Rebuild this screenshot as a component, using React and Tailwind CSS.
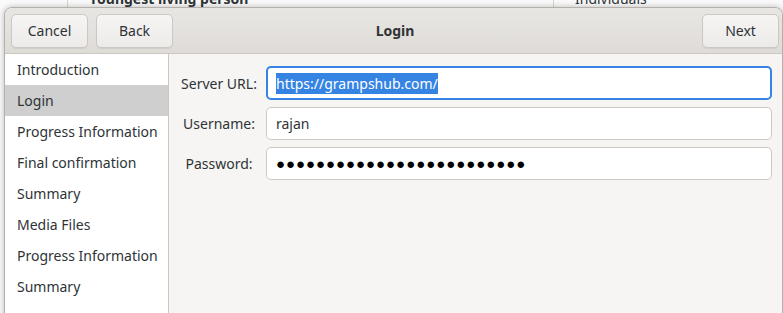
import React from 'react';

const steps = [
  'Introduction',
  'Login',
  'Progress Information',
  'Final confirmation',
  'Summary',
  'Media Files',
  'Progress Information',
  'Summary',
];

const font = { fontFamily: '"Noto Sans", "Open Sans", sans-serif' };

const Button = ({ children }) => (
  <button className="h-[34px] w-[77px] rounded-[5px] border border-[#cdc7c2] bg-gradient-to-b from-[#f6f5f4] to-[#edebe9] text-[14px] text-[#2e3436] shadow-[0_1px_1px_rgba(0,0,0,0.07)]">
    {children}
  </button>
);

const Field = ({ label, children, focused }) => (
  <div className="flex items-center gap-[9px]">
    <div className="w-[76px] whitespace-nowrap text-center text-[14px] text-[#2e3436]">{label}</div>
    <div
      className={`flex flex-1 items-center rounded-[5px] bg-white text-[14px] text-[#2e3436] ${
        focused ? 'h-[34px] border-2 border-[#3584e4] px-[8px]' : 'h-[33px] border border-[#cdc7c2] px-[9px]'
      }`}
    >
      {children}
    </div>
  </div>
);

const App = () => {
  return (
    <div className="relative h-[313px] w-[783px] overflow-hidden bg-[#fafafa]" style={font}>
      {/* window behind the dialog */}
      <div className="flex h-[7px] text-[14px] font-bold leading-none text-[#2e3436]">
        <div className="w-[68px] border-r border-[#d8d4d0]" />
        <div className="w-[486px] border-r border-[#d8d4d0] pl-[21px]">
          <span className="relative -top-[8px]">Youngest living person</span>
        </div>
        <div className="pl-[21px] font-normal">
          <span className="relative -top-[8px]">Individuals</span>
        </div>
      </div>

      <div className="absolute left-[4px] top-[7px] flex h-[320px] w-[779px] flex-col overflow-hidden rounded-t-[8px] border border-[#b6b0aa] bg-[#f6f5f4] shadow-[0_0_6px_rgba(0,0,0,0.25)]">
        <div className="grid h-[46px] shrink-0 grid-cols-[1fr_auto_1fr] items-center border-b border-[#cdc7c2] bg-gradient-to-b from-[#e8e6e3] to-[#dfdcd8] pl-[6px] pr-[3px]">
          <div className="flex gap-[8px]">
            <Button>Cancel</Button>
            <Button>Back</Button>
          </div>
          <div className="text-center text-[14px] font-bold text-[#2e3436]">Login</div>
          <div className="flex justify-end">
            <Button>Next</Button>
          </div>
        </div>

        <div className="flex flex-1">
          <div className="w-[164px] shrink-0 border-r border-[#cdc7c2] bg-white">
            {steps.map((s, i) => (
              <div
                key={i}
                className={`flex h-[31px] items-center pl-[12px] text-[14px] text-[#2e3436] ${
                  i === 1 ? 'bg-[#cfcfcf]' : ''
                }`}
              >
                {s}
              </div>
            ))}
          </div>

          <div className="flex flex-1 flex-col gap-[7px] pl-[12px] pr-[10px] pt-[12px]">
            <Field label="Server URL:" focused>
              <span className="bg-[#3584e4] text-white">https://grampshub.com/</span>
            </Field>
            <Field label="Username:">rajan</Field>
            <Field label="Password:">
              <span className="text-[15px] tracking-[0.95px] text-black">{'●'.repeat(25)}</span>
            </Field>
          </div>
        </div>
      </div>
    </div>
  );
};

export default App;
